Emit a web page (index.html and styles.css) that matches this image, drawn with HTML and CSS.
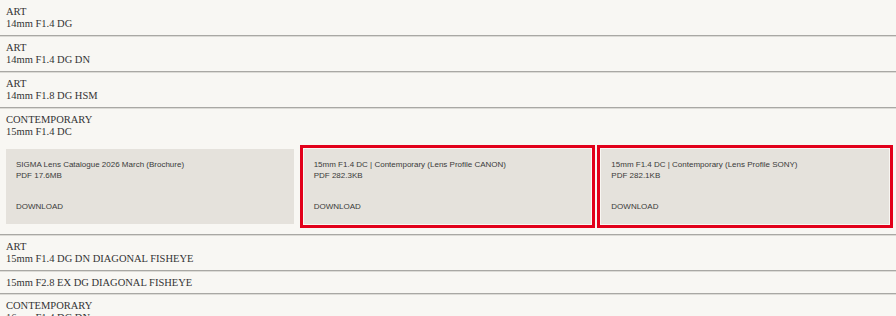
FILE: index.html
```html
<!DOCTYPE html>
<html>
<head>
    <title>Lens Downloads</title>
    <link rel="stylesheet" href="styles.css">
</head>
<body>
    <div class="lens-list">
        <div class="lens-row">
            <div class="lens-line">ART</div>
            <div class="lens-line">14mm F1.4 DG</div>
        </div>
        <div class="lens-row">
            <div class="lens-line">ART</div>
            <div class="lens-line">14mm F1.4 DG DN</div>
        </div>
        <div class="lens-row">
            <div class="lens-line">ART</div>
            <div class="lens-line">14mm F1.8 DG HSM</div>
        </div>
        <div class="lens-row open">
            <div class="lens-line">CONTEMPORARY</div>
            <div class="lens-line">15mm F1.4 DC</div>
            <div class="downloads">
                <div class="card">
                    <div class="card-title">SIGMA Lens Catalogue 2026 March (Brochure)</div>
                    <div class="card-size">PDF 17.6MB</div>
                    <div class="card-link">DOWNLOAD</div>
                </div>
                <div class="card marked">
                    <div class="card-title">15mm F1.4 DC | Contemporary (Lens Profile CANON)</div>
                    <div class="card-size">PDF 282.3KB</div>
                    <div class="card-link">DOWNLOAD</div>
                </div>
                <div class="card marked">
                    <div class="card-title">15mm F1.4 DC | Contemporary (Lens Profile SONY)</div>
                    <div class="card-size">PDF 282.1KB</div>
                    <div class="card-link">DOWNLOAD</div>
                </div>
            </div>
        </div>
        <div class="lens-row">
            <div class="lens-line">ART</div>
            <div class="lens-line">15mm F1.4 DG DN DIAGONAL FISHEYE</div>
        </div>
        <div class="lens-row single">
            <div class="lens-line">15mm F2.8 EX DG DIAGONAL FISHEYE</div>
        </div>
        <div class="lens-row">
            <div class="lens-line">CONTEMPORARY</div>
            <div class="lens-line">16mm F1.4 DG DN</div>
        </div>
    </div>
</body>
</html>
```

FILE: styles.css
```css
/* Global styles */
* {
    margin: 0;
    padding: 0;
    box-sizing: border-box;
}

body {
    background-color: #f8f7f3;
    color: #333;
    font-family: 'Liberation Serif', 'Times New Roman', serif;
    overflow: hidden;
}

.lens-row {
    padding: 6px 6px 5px;
    border-bottom: 1px solid #a9a8a4;
    box-shadow: 0 1px 0 #dcdbd6;
}

.lens-row.single {
    padding-bottom: 4px;
}

.lens-line {
    font-size: 10.5px;
    line-height: 12px;
}

/* Download cards */
.downloads {
    display: grid;
    grid-template-columns: repeat(3, 1fr);
    gap: 10px;
    margin: 11px 1px 5px 0;
}

.card {
    background-color: #e5e2dc;
    padding: 10px 10px 12px;
    font-family: 'Liberation Sans', Arial, sans-serif;
    font-size: 8px;
    line-height: 11px;
    color: #3a3a3a;
}

.card-link {
    margin-top: 20px;
}

.card.marked {
    outline: 3px solid #e2001a;
    outline-offset: 1px;
}
```
